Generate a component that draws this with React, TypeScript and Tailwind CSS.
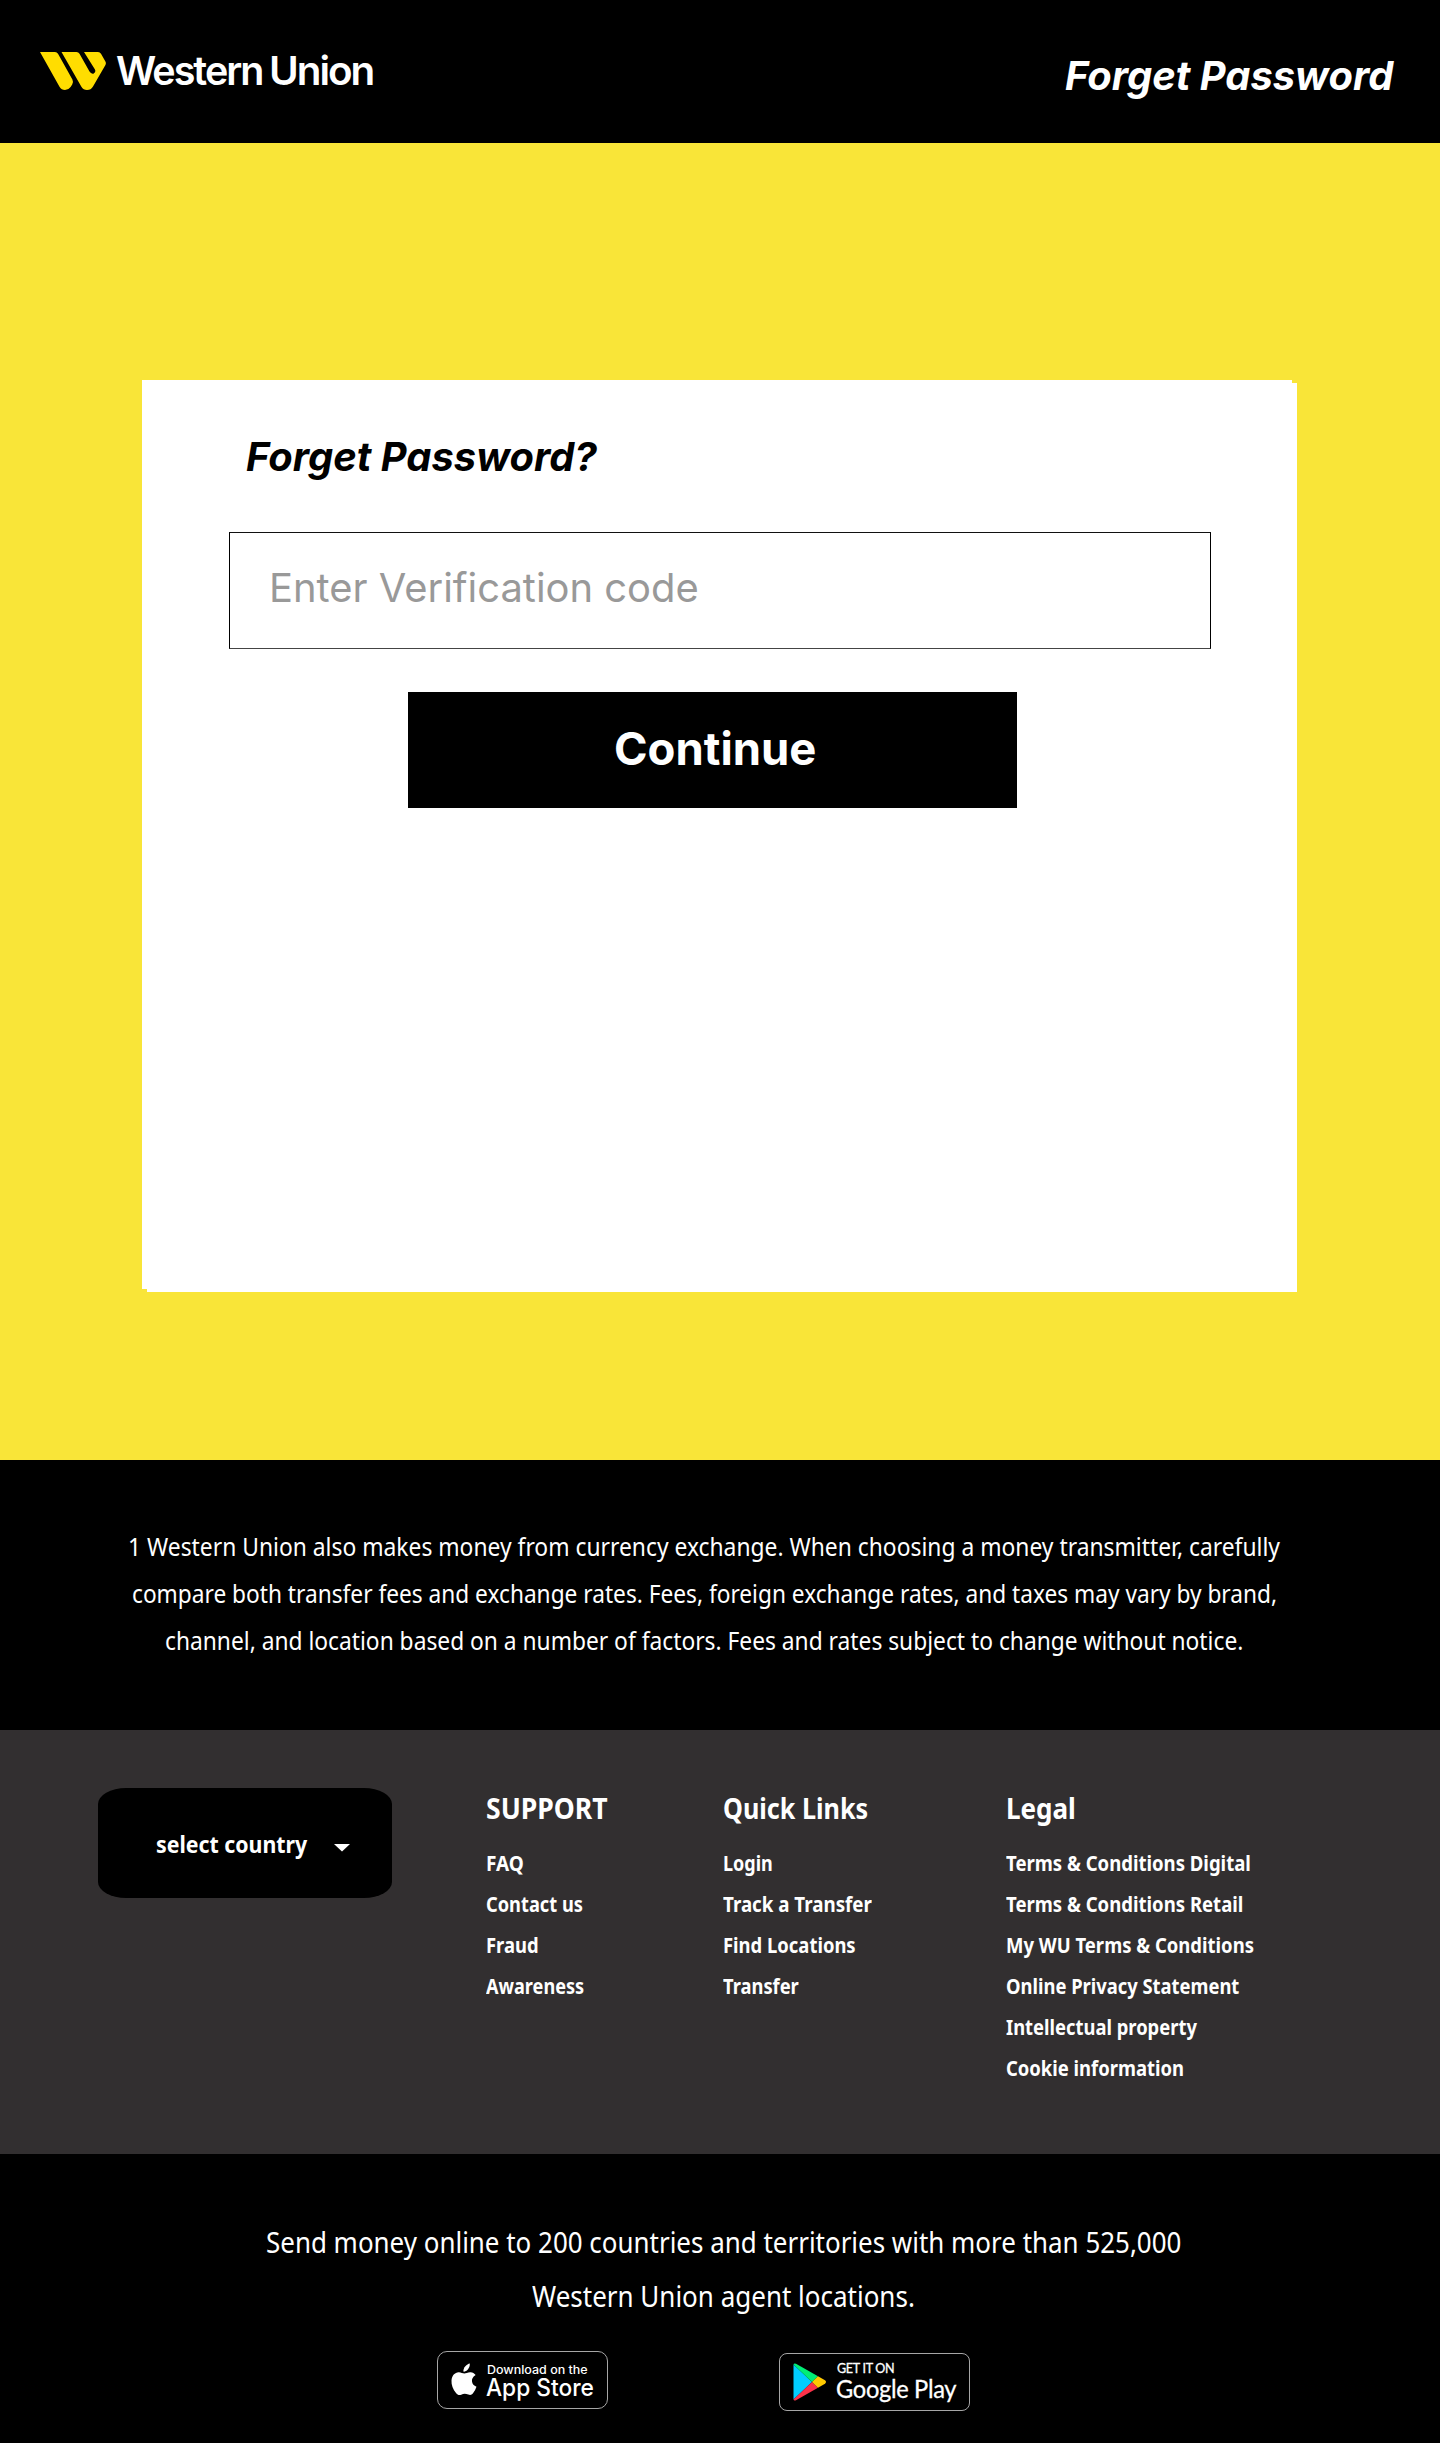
import { useLayoutEffect, useRef, useState } from "react";
import type { ReactNode } from "react";

/** A single line of text condensed or stretched to fill the width of its box. */
function FitLine({ className, children }: { className: string; children: ReactNode }) {
  const box = useRef<HTMLSpanElement>(null);
  const line = useRef<HTMLSpanElement>(null);
  const [scale, setScale] = useState(1);
  useLayoutEffect(() => {
    if (box.current && line.current) {
      setScale(box.current.clientWidth / line.current.offsetWidth);
    }
  }, []);
  return (
    <span ref={box} className={`block shrink-0 ${className}`}>
      <span
        ref={line}
        className="inline-block origin-left whitespace-nowrap align-top"
        style={{ transform: `scaleX(${scale})` }}
      >
        {children}
      </span>
    </span>
  );
}

type Item = { label: string; width: string };

const support: Item[] = [
  { label: "FAQ", width: "w-[38px]" },
  { label: "Contact us", width: "w-[97px]" },
  { label: "Fraud", width: "w-[53px]" },
  { label: "Awareness", width: "w-[98px]" },
];

const quickLinks: Item[] = [
  { label: "Login", width: "w-[50px]" },
  { label: "Track a Transfer", width: "w-[149px]" },
  { label: "Find Locations", width: "w-[133px]" },
  { label: "Transfer", width: "w-[76px]" },
];

const legal: Item[] = [
  { label: "Terms & Conditions Digital", width: "w-[245px]" },
  { label: "Terms & Conditions Retail", width: "w-[237px]" },
  { label: "My WU Terms & Conditions", width: "w-[248px]" },
  { label: "Online Privacy Statement", width: "w-[233px]" },
  { label: "Intellectual property", width: "w-[191px]" },
  { label: "Cookie information", width: "w-[178px]" },
];

function LinkColumn({ title, titleWidth, items, className }: { title: string; titleWidth: string; items: Item[]; className: string }) {
  return (
    <div className={className}>
      <h3>
        <FitLine className={`text-[29px] leading-[40px] font-bold ${titleWidth}`}>{title}</FitLine>
      </h3>
      <ul className="mt-[15px]">
        {items.map((item) => (
          <li key={item.label}>
            <FitLine className={`text-[20.500px] leading-[41px] font-bold ${item.width}`}>{item.label}</FitLine>
          </li>
        ))}
      </ul>
    </div>
  );
}

function Logo() {
  return (
    <div className="flex items-start font-['Inter',sans-serif] text-[40px] leading-[52px] font-semibold tracking-[-0.05em]">
      <svg className="mt-[52px] h-[38px] w-[66px]" viewBox="0 0 66 38" fill="#ffdd00">
        <path d="M0 0H15Q17 0 18 1.800L32.400 27.500Q33.700 30 32.200 32.500L30.600 35Q28.500 38 25 38Q21.500 38 19.500 34.800Z" />
        <path d="M21.500 0H36.500Q38.500 0 39.500 1.800L49.500 19.500Q51.300 22.400 53.800 21.400Q56.300 20 54.800 17.200L44 0H58Q60 0 61 1.800L65.400 9.600Q66.400 11.400 65.300 13.300L53 34.500Q51 38 47 38Q43.400 38 41.400 34.800Z" />
      </svg>
      <FitLine className="mt-[45px] ml-[10px] w-[147px]">Western</FitLine>
      <FitLine className="mt-[45px] ml-[6px] w-[104px]">Union</FitLine>
    </div>
  );
}

function AppStoreBadge() {
  return (
    <div className="mt-[11px] flex h-[58px] w-[171px] rounded-[10px] border border-[#a6a6a6] pl-[13px] font-['Inter',sans-serif]">
      <svg className="mt-[11px] h-[33px] w-[26px]" viewBox="0 0 26 33" fill="white">
        <path d="M18.800 0.500C19 3.100 18 5 16.800 6.500C15.500 8 13.900 8.800 12.400 8.600C12.200 6.500 13.200 4.700 14.400 3.300C15.600 1.900 17.300 0.800 18.800 0.500Z" />
        <path d="M24.600 12.100C21.500 14 20.700 16.400 21 18.500C21.300 21 22.900 22.700 25.500 23.700C24.700 26.200 23.500 28.400 22 30.300C20.700 32 19.300 32.400 17.300 31.600C14.500 30.500 12.600 30.600 10.200 31.700C8.200 32.500 6.700 32.100 5.200 30.300C1.900 26.300 0.200 21.600 0.500 17.400C0.800 12.600 3.800 9.400 7.700 9.200C9.700 9.100 11.800 10.500 13.300 10.500C14.800 10.500 17 9 19.600 9.200C21.600 9.400 23.400 10.300 24.600 12.100Z" />
      </svg>
      <div className="ml-[9px] pt-[10px]">
        <FitLine className="ml-px w-[101px] text-[11.500px] leading-[17px] font-medium">Download on the</FitLine>
        <FitLine className="w-[108px] text-[24px] leading-[17px] font-medium">App Store</FitLine>
      </div>
    </div>
  );
}

function GooglePlayBadge() {
  return (
    <div className="mt-[13px] flex h-[58px] w-[191px] rounded-[8px] border border-[#a6a6a6] pl-[13px]">
      <svg className="mt-[9px] h-[38px] w-[34px]" viewBox="0 0 34 38">
        <path d="M0.500 1.500V36.500L19 19Z" fill="#00cdff" />
        <path d="M0.500 1.500Q1 -0.300 3 0.800L25 13.300L19 19Z" fill="#00ee76" />
        <path d="M0.500 36.500Q1 38.300 3 37.200L25 24.700L19 19Z" fill="#fb3149" />
        <path d="M25 13.300L32 17.300Q34 19 32 20.700L25 24.700L19 19Z" fill="#ffc900" />
      </svg>
      <div className="ml-[9px] pt-[5px] font-['Lato',sans-serif] tracking-[-0.02em] [-webkit-text-stroke:0.3px_white]">
        <FitLine className="ml-px w-[57px] text-[13px] leading-[18px]">GET IT ON</FitLine>
        <FitLine className="w-[120px] text-[25px] leading-[22px]">Google Play</FitLine>
      </div>
    </div>
  );
}

export default function App() {
  return (
    <div className="h-[2443px] w-[1440px] overflow-hidden bg-black font-['Noto_Sans',sans-serif] text-white">
      <header className="flex h-[143px] items-start justify-between pr-[47px] pl-[40px]">
        <Logo />
        <FitLine className="mt-[51px] w-[328px] font-['Inter',sans-serif] text-[40px] leading-[50px] font-bold italic">
          Forget Password
        </FitLine>
      </header>

      <main className="h-[1317px] bg-[#f9e538] pt-[237px] pl-[142px] font-['Inter',sans-serif]">
        <section className="relative h-[912px] w-[1155px] bg-white">
          <span className="absolute top-0 right-0 h-[3px] w-[5px] bg-[#f9e538]" />
          <span className="absolute bottom-0 left-0 h-[3px] w-[5px] bg-[#f9e538]" />
          <h1 className="pt-[52px] pl-[104px] text-black">
            <FitLine className="w-[351px] text-[40px] leading-[50px] font-bold italic">Forget Password?</FitLine>
          </h1>
          <div className="mt-[50px] ml-[87px] h-[117px] w-[982px] border border-x-black border-t-[#111] border-b-[#444] pt-[30px] pl-[39px] text-[#999]">
            <FitLine className="w-[430px] text-[40px] leading-[50px]">Enter Verification code</FitLine>
          </div>
          <button className="mt-[43px] ml-[266px] flex h-[116px] w-[609px] bg-black pt-[27px] pl-[206px] text-left">
            <FitLine className="w-[202px] text-[45px] leading-[60px] font-bold">Continue</FitLine>
          </button>
        </section>
      </main>

      <section className="flex h-[270px] flex-col items-center pt-[63px] pr-[32px] text-[24.500px] leading-[47px]">
        <FitLine className="w-[1152px]">
          1 Western Union also makes money from currency exchange. When choosing a money transmitter, carefully
        </FitLine>
        <FitLine className="w-[1145px]">
          compare both transfer fees and exchange rates. Fees, foreign exchange rates, and taxes may vary by brand,
        </FitLine>
        <FitLine className="w-[1078px]">
          channel, and location based on a number of factors. Fees and rates subject to change without notice.
        </FitLine>
      </section>

      <section className="flex h-[424px] items-start bg-[#322f30] pt-[58px] pl-[98px]">
        <button className="flex h-[110px] w-[294px] rounded-[28px/16px] bg-black pt-[36px] pl-[58px] text-left">
          <FitLine className="w-[151px] text-[24px] leading-[40px] font-bold">select country</FitLine>
          <svg className="mt-[20px] ml-[27px] h-[8px] w-[16px]" viewBox="0 0 16 8" fill="white">
            <path d="M0 0H16L8 7.500Z" />
          </svg>
        </button>
        <LinkColumn className="ml-[94px] w-[237px]" title="SUPPORT" titleWidth="w-[122px]" items={support} />
        <LinkColumn className="w-[283px]" title="Quick Links" titleWidth="w-[145px]" items={quickLinks} />
        <LinkColumn className="w-[260px]" title="Legal" titleWidth="w-[70px]" items={legal} />
      </section>

      <footer>
        <div className="flex flex-col items-center pt-[61px] pl-[7px] text-[28.500px] leading-[54px]">
          <FitLine className="w-[915px]">Send money online to 200 countries and territories with more than 525,000</FitLine>
          <FitLine className="w-[383px]">Western Union agent locations.</FitLine>
        </div>
        <div className="flex items-start gap-[171px] pt-[17px] pl-[437px]">
          <AppStoreBadge />
          <GooglePlayBadge />
        </div>
      </footer>
    </div>
  );
}
